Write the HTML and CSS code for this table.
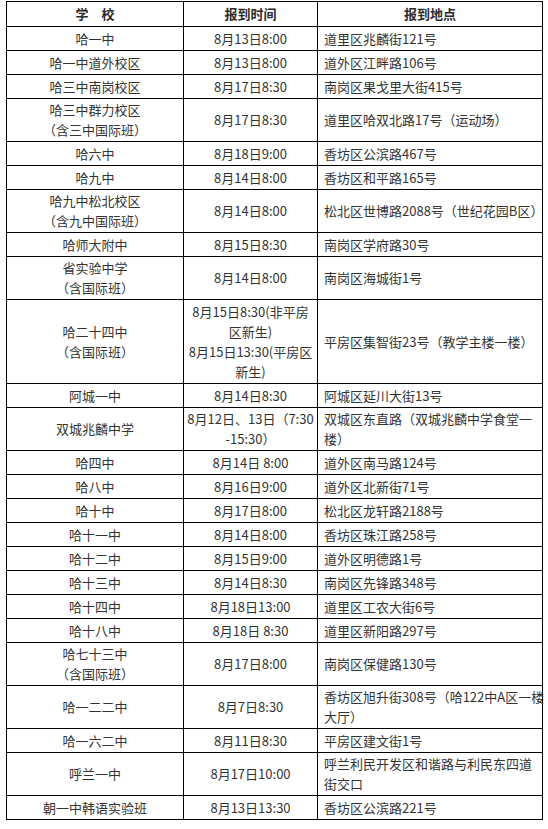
FILE: index.html
```html
<!DOCTYPE html>
<html lang="zh-CN">
<head>
<meta charset="utf-8">
<title>报到时间地点</title>
<link rel="stylesheet" href="styles.css">
</head>
<body>
<table class="tbl">
  <colgroup>
    <col class="c1"><col class="c2"><col class="c3">
  </colgroup>
  <thead>
    <tr><th>学　校</th><th>报到时间</th><th>报到地点</th></tr>
  </thead>
  <tbody>
    <tr><td>哈一中</td><td>8月13日8:00</td><td>道里区兆麟街121号</td></tr>
    <tr><td>哈一中道外校区</td><td>8月13日8:00</td><td>道外区江畔路106号</td></tr>
    <tr><td>哈三中南岗校区</td><td>8月17日8:30</td><td>南岗区果戈里大街415号</td></tr>
    <tr class="tall"><td>哈三中群力校区<br>（含三中国际班）</td><td>8月17日8:30</td><td>道里区哈双北路17号（运动场）</td></tr>
    <tr><td>哈六中</td><td>8月18日9:00</td><td>香坊区公滨路467号</td></tr>
    <tr><td>哈九中</td><td>8月14日8:00</td><td>香坊区和平路165号</td></tr>
    <tr class="tall"><td>哈九中松北校区<br>（含九中国际班）</td><td>8月14日8:00</td><td>松北区世博路2088号（世纪花园B区）</td></tr>
    <tr><td>哈师大附中</td><td>8月15日8:30</td><td>南岗区学府路30号</td></tr>
    <tr class="tall"><td>省实验中学<br>（含国际班）</td><td>8月14日8:00</td><td>南岗区海城街1号</td></tr>
    <tr><td>哈二十四中<br>（含国际班）</td><td>8月15日8:30(非平房<br>区新生)<br>8月15日13:30(平房区<br>新生)</td><td>平房区集智街23号（教学主楼一楼）</td></tr>
    <tr><td>阿城一中</td><td>8月14日8:30</td><td>阿城区延川大街13号</td></tr>
    <tr class="tall"><td>双城兆麟中学</td><td>8月12日、13日（7:30<br>-15:30）</td><td>双城区东直路（双城兆麟中学食堂一<br>楼）</td></tr>
    <tr><td>哈四中</td><td>8月14日 8:00</td><td>道外区南马路124号</td></tr>
    <tr><td>哈八中</td><td>8月16日9:00</td><td>道外区北新街71号</td></tr>
    <tr><td>哈十中</td><td>8月17日8:00</td><td>松北区龙轩路2188号</td></tr>
    <tr><td>哈十一中</td><td>8月14日8:00</td><td>香坊区珠江路258号</td></tr>
    <tr><td>哈十二中</td><td>8月15日9:00</td><td>道外区明德路1号</td></tr>
    <tr><td>哈十三中</td><td>8月14日8:30</td><td>南岗区先锋路348号</td></tr>
    <tr><td>哈十四中</td><td>8月18日13:00</td><td>道里区工农大街6号</td></tr>
    <tr><td>哈十八中</td><td>8月18日 8:30</td><td>道里区新阳路297号</td></tr>
    <tr class="tall"><td>哈七十三中<br>（含国际班）</td><td>8月17日8:00</td><td>南岗区保健路130号</td></tr>
    <tr class="tall"><td>哈一二二中</td><td>8月7日8:30</td><td>香坊区旭升街308号（哈122中A区一楼<br>大厅）</td></tr>
    <tr><td>哈一六二中</td><td>8月11日8:30</td><td>平房区建文街1号</td></tr>
    <tr class="tall"><td>呼兰一中</td><td>8月17日10:00</td><td>呼兰利民开发区和谐路与利民东四道<br>街交口</td></tr>
    <tr><td>朝一中韩语实验班</td><td>8月13日13:30</td><td>香坊区公滨路221号</td></tr>
  </tbody>
</table>
</body>
</html>
```
FILE: styles.css
```css
html, body {
  margin: 0;
  background: #fff;
}
body {
  padding: 1px 0 0 6px;
  font-family: "Noto Sans CJK SC", "Noto Sans", sans-serif;
  font-size: 13px;
  color: #333;
}
.tbl {
  border-collapse: collapse;
  table-layout: fixed;
  width: 536px;
}
.c1 { width: 177px; }
.c2 { width: 134px; }
.c3 { width: 225px; }
.tbl th,
.tbl td {
  border: 1px solid #000;
  line-height: 20px;
  padding: 2px 2px 1px;
  vertical-align: middle;
  text-align: center;
  white-space: nowrap;
}
.tbl th {
  font-weight: bold;
  padding: 2px 2px 2px;
  color: #2b2b2b;
}
.tbl td:nth-child(3) {
  text-align: left;
  padding-left: 6px;
}
.tbl tr.tall td {
  padding-top: 1px;
  padding-bottom: 1px;
}
```
